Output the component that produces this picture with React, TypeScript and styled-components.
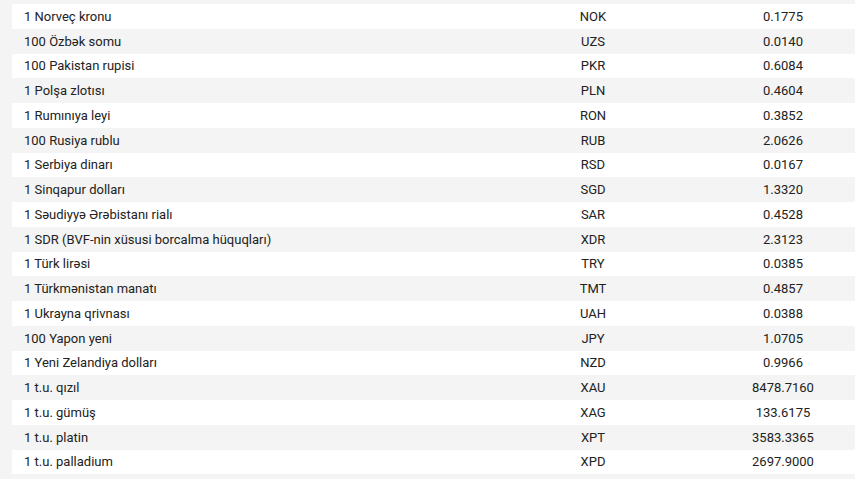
import React from 'react'
import styled, { createGlobalStyle } from 'styled-components'

const GlobalStyle = createGlobalStyle`
  body {
    margin: 0;
    background: #ffffff;
    font-family: Roboto, "Noto Sans", sans-serif;
  }
`

const Wrapper = styled.div`
  background: #f4f4f4;
  padding: 4px 0 5px 12px;
  width: 843px;
`

const Table = styled.div`
  display: flex;
  flex-direction: column;
`

const Row = styled.div<{ $striped: boolean }>`
  display: grid;
  grid-template-columns: 463px 236px 1fr;
  align-items: center;
  height: 24.75px;
  background: ${(p) => (p.$striped ? '#f4f4f4' : '#ffffff')};
  color: #222222;
  font-size: 13px;
`

const Name = styled.div`
  padding-left: 12px;
  white-space: nowrap;
`

const Code = styled.div`
  text-align: center;
`

const Value = styled.div`
  text-align: center;
`

const rates: [string, string, string][] = [
  ['1 Norveç kronu', 'NOK', '0.1775'],
  ['100 Özbək somu', 'UZS', '0.0140'],
  ['100 Pakistan rupisi', 'PKR', '0.6084'],
  ['1 Polşa zlotısı', 'PLN', '0.4604'],
  ['1 Rumınıya leyi', 'RON', '0.3852'],
  ['100 Rusiya rublu', 'RUB', '2.0626'],
  ['1 Serbiya dinarı', 'RSD', '0.0167'],
  ['1 Sinqapur dolları', 'SGD', '1.3320'],
  ['1 Səudiyyə Ərəbistanı rialı', 'SAR', '0.4528'],
  ['1 SDR (BVF-nin xüsusi borcalma hüquqları)', 'XDR', '2.3123'],
  ['1 Türk lirəsi', 'TRY', '0.0385'],
  ['1 Türkmənistan manatı', 'TMT', '0.4857'],
  ['1 Ukrayna qrivnası', 'UAH', '0.0388'],
  ['100 Yapon yeni', 'JPY', '1.0705'],
  ['1 Yeni Zelandiya dolları', 'NZD', '0.9966'],
  ['1 t.u. qızıl', 'XAU', '8478.7160'],
  ['1 t.u. gümüş', 'XAG', '133.6175'],
  ['1 t.u. platin', 'XPT', '3583.3365'],
  ['1 t.u. palladium', 'XPD', '2697.9000'],
]

export default function App() {
  return (
    <>
      <GlobalStyle />
      <Wrapper>
        <Table>
          {rates.map(([name, code, value], i) => (
            <Row key={code} $striped={i % 2 === 1}>
              <Name>{name}</Name>
              <Code>{code}</Code>
              <Value>{value}</Value>
            </Row>
          ))}
        </Table>
      </Wrapper>
    </>
  )
}
